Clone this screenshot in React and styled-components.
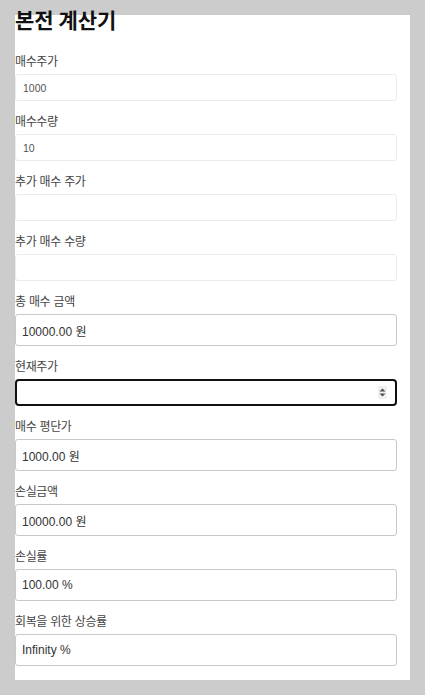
import React, { useState } from "react";
import styled, { createGlobalStyle } from "styled-components";

const Global = createGlobalStyle`
  html, body {
    margin: 0;
    padding: 0;
    background: #cccccc;
  }
  body {
    font-family: "Liberation Sans", "Noto Sans CJK KR", sans-serif;
  }
  * { box-sizing: border-box; }
`;

const Panel = styled.main`
  margin: 15px;
  background: #ffffff;
  padding: 0 13px 14px 0;
  display: flex;
  flex-direction: column;
`;

const Title = styled.h1`
  margin: -6px 0 23px 0;
  font-family: "Noto Sans CJK KR", sans-serif;
  font-size: 21px;
  line-height: 20px;
  font-weight: 700;
  color: #111;
  letter-spacing: 0;
`;

const Field = styled.div`
  display: flex;
  flex-direction: column;
  margin-top: ${(p) => (p.$first ? "0" : "11px")};
`;

const Label = styled.label`
  font-family: "Noto Sans CJK KR", sans-serif;
  font-size: 12px;
  line-height: 18px;
  color: #444;
  margin-bottom: 4px;
  letter-spacing: -0.4px;
  word-spacing: 1px;
`;

const InputWrap = styled.div`
  position: relative;
  display: flex;
`;

const Input = styled.input`
  width: 100%;
  margin: 0;
  font-family: "Liberation Sans", "Noto Sans CJK KR", sans-serif;
  outline: none;
  background: #fff;
  caret-color: #111;
  &::-webkit-inner-spin-button,
  &::-webkit-outer-spin-button {
    -webkit-appearance: none;
    margin: 0;
  }
  ${(p) =>
    p.$kind === "light"
      ? `
    height: 27px;
    border: 1px solid #ebebeb;
    border-radius: 3px;
    padding: 0 7px;
    font-size: 10.5px;
    color: #555;
  `
      : p.$kind === "focus"
      ? `
    height: 27px;
    border: 2px solid #111;
    border-radius: 4px;
    padding: 0 24px 0 6px;
    font-size: 12px;
    color: #222;
  `
      : `
    height: 32px;
    border: 1px solid #c8c8c8;
    border-radius: 3px;
    padding: 0 6px;
    font-size: 12px;
    color: #333;
  `}
`;

const Spinner = styled.span`
  position: absolute;
  right: 10px;
  top: 7px;
  width: 9px;
  height: 13px;
  background: #f1f1f1;
  display: flex;
  align-items: center;
  justify-content: center;
  pointer-events: none;
`;

function SpinIcon() {
  return (
    <svg width="7" height="9" viewBox="0 0 7 9">
      <path d="M3.5 0.5 L6.5 3.5 L0.5 3.5 Z" fill="#505050" />
      <path d="M3.5 8.5 L6.5 5.5 L0.5 5.5 Z" fill="#505050" />
    </svg>
  );
}

export default function App() {
  const [price, setPrice] = useState("1000");
  const [qty, setQty] = useState("10");
  const [addPrice, setAddPrice] = useState("");
  const [addQty, setAddQty] = useState("");
  const [cur, setCur] = useState("");

  const p = parseFloat(price) || 0;
  const q = parseFloat(qty) || 0;
  const ap = parseFloat(addPrice) || 0;
  const aq = parseFloat(addQty) || 0;
  const c = parseFloat(cur) || 0;

  const total = p * q + ap * aq;
  const totalQty = q + aq;
  const avg = totalQty ? total / totalQty : 0;
  const lossAmt = total - c * totalQty;
  const lossRate = avg ? ((avg - c) / avg) * 100 : 0;
  const recover = (avg / c - 1) * 100;
  const recoverText = c === 0 ? "Infinity" : recover.toFixed(2);

  const inputs = [
    { label: "매수주가", value: price, set: setPrice },
    { label: "매수수량", value: qty, set: setQty },
    { label: "추가 매수 주가", value: addPrice, set: setAddPrice },
    { label: "추가 매수 수량", value: addQty, set: setAddQty },
  ];

  return (
    <>
      <Global />
      <Panel>
        <Title>본전 계산기</Title>
        {inputs.map((f, i) => (
          <Field key={f.label} $first={i === 0}>
            <Label>{f.label}</Label>
            <Input
              $kind="light"
              type="text"
              value={f.value}
              onChange={(e) => f.set(e.target.value)}
            />
          </Field>
        ))}
        <Field>
          <Label>총 매수 금액</Label>
          <Input $kind="result" readOnly value={`${total.toFixed(2)} 원`} />
        </Field>
        <Field>
          <Label>현재주가</Label>
          <InputWrap>
            <Input
              $kind="focus"
              type="number"
              autoFocus
              value={cur}
              onChange={(e) => setCur(e.target.value)}
            />
            <Spinner>
              <SpinIcon />
            </Spinner>
          </InputWrap>
        </Field>
        <Field>
          <Label>매수 평단가</Label>
          <Input $kind="result" readOnly value={`${avg.toFixed(2)} 원`} />
        </Field>
        <Field>
          <Label>손실금액</Label>
          <Input $kind="result" readOnly value={`${lossAmt.toFixed(2)} 원`} />
        </Field>
        <Field>
          <Label>손실률</Label>
          <Input $kind="result" readOnly value={`${lossRate.toFixed(2)} %`} />
        </Field>
        <Field>
          <Label>회복을 위한 상승률</Label>
          <Input $kind="result" readOnly value={`${recoverText} %`} />
        </Field>
      </Panel>
    </>
  );
}
